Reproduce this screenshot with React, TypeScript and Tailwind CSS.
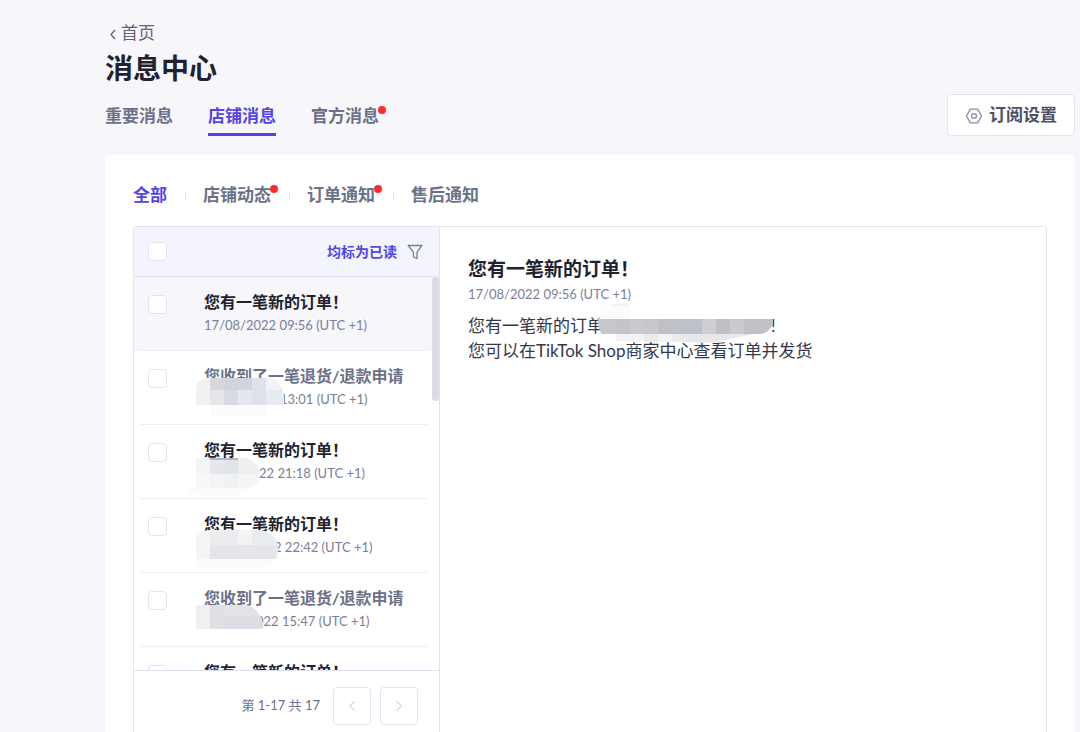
import { ChevronLeft, ChevronRight } from 'lucide-react';
import React from 'react';

type Block = { x: number; y: number; w: number; h: number; fill: string };

type Message = {
  id: number;
  title: string;
  time?: string;
  unread: boolean;
  // width of the censored start of the date
  pad?: string;
  maskTop?: string;
  mask?: { path: string; tail?: string; blocks: Block[] };
};

const messages: Message[] = [
  { id: 1, title: '您有一笔新的订单！', time: '17/08/2022 09:56 (UTC +1)', unread: true },
  {
    id: 2,
    title: '您收到了一笔退货/退款申请',
    time: '13:01 (UTC +1)',
    unread: false,
    pad: 'pl-[76px]',
    maskTop: 'top-[14px]',
    mask: {
      path: 'M0 27V10Q2 1 12 0H74Q86 3 88 18V27Z',
      tail: 'M14 27H70V37H14Z',
      blocks: [
        { x: 0, y: 0, w: 14, h: 27, fill: '#f1f1f3' },
        { x: 14, y: 0, w: 14, h: 12, fill: '#d6d7df' },
        { x: 28, y: 0, w: 28, h: 12, fill: '#d1d3dd' },
        { x: 56, y: 0, w: 14, h: 12, fill: '#dfe0ea' },
        { x: 70, y: 0, w: 18, h: 12, fill: '#f3f3f5' },
        { x: 14, y: 12, w: 14, h: 15, fill: '#e5e6ea' },
        { x: 28, y: 12, w: 14, h: 15, fill: '#d9dbe3' },
        { x: 42, y: 12, w: 14, h: 15, fill: '#e6e7ec' },
        { x: 56, y: 12, w: 14, h: 15, fill: '#dfe1e8' },
        { x: 70, y: 12, w: 18, h: 15, fill: '#e7eaee' },
      ],
    },
  },
  {
    id: 3,
    title: '您有一笔新的订单！',
    time: '22 21:18 (UTC +1)',
    unread: true,
    pad: 'pl-[55px]',
    maskTop: 'top-5',
    mask: {
      path: 'M0 0H50Q63 4 64 17Q63 27 54 30H0Z',
      tail: 'M-8 30H56Q48 36 40 37H0Q-6 36 -8 30Z',
      blocks: [
        { x: 0, y: 0, w: 14, h: 16, fill: '#f3f4f6' },
        { x: 0, y: 16, w: 14, h: 14, fill: '#f8f8f9' },
        { x: 14, y: 0, w: 14, h: 16, fill: '#e6e7ea' },
        { x: 28, y: 0, w: 14, h: 16, fill: '#e1e4ea' },
        { x: 42, y: 0, w: 22, h: 16, fill: '#eeeff1' },
        { x: 14, y: 16, w: 14, h: 14, fill: '#f4f4f6' },
        { x: 28, y: 16, w: 14, h: 14, fill: '#f0f1f3' },
        { x: 42, y: 16, w: 22, h: 14, fill: '#f5f5f6' },
        { x: 14, y: 0, w: 28, h: 2, fill: '#b4b5bc' },
      ],
    },
  },
  {
    id: 4,
    title: '您有一笔新的订单！',
    time: '2 22:42 (UTC +1)',
    unread: true,
    pad: 'pl-[70px]',
    maskTop: 'top-[18px]',
    mask: {
      path: 'M0 29V8Q3 0 14 0H66Q80 4 82 16Q82 25 80 29Z',
      tail: 'M0 29H80Q74 38 62 38H10Q0 36 0 29Z',
      blocks: [
        { x: 0, y: 0, w: 14, h: 29, fill: '#f5f5f6' },
        { x: 14, y: 0, w: 28, h: 15, fill: '#ececee' },
        { x: 42, y: 0, w: 14, h: 15, fill: '#f3f3f5' },
        { x: 56, y: 0, w: 26, h: 15, fill: '#ebecee' },
        { x: 14, y: 15, w: 28, h: 14, fill: '#e4e5e8' },
        { x: 42, y: 15, w: 14, h: 14, fill: '#e6e6ea' },
        { x: 56, y: 15, w: 26, h: 14, fill: '#e5e6ea' },
      ],
    },
  },
  {
    id: 5,
    title: '您收到了一笔退货/退款申请',
    time: '022 15:47 (UTC +1)',
    unread: false,
    pad: 'pl-[52px]',
    maskTop: 'top-[19px]',
    mask: {
      path: 'M0 0H52Q66 7 67 20V24H0Z',
      blocks: [
        { x: 0, y: 0, w: 14, h: 24, fill: '#f0f0f2' },
        { x: 14, y: 0, w: 14, h: 24, fill: '#dfe0e4' },
        { x: 28, y: 0, w: 39, h: 11, fill: '#e2e3e7' },
        { x: 28, y: 11, w: 39, h: 13, fill: '#dddee3' },
      ],
    },
  },
  { id: 6, title: '您有一笔新的订单！', unread: true },
];

const Dot = () => (
  <span className="absolute -right-[7px] top-0.5 size-2 rounded-full bg-[#ff2a2a]"></span>
);

const Mask = ({ id, path, tail, blocks }: { id: string; path: string; tail?: string; blocks: Block[] }) => (
  <svg width="90" height="40" viewBox="0 0 90 40" className="overflow-visible" aria-hidden="true">
    <clipPath id={id}>
      <path d={path} />
    </clipPath>
    {tail && <path d={tail} fill="#fbfbfc" />}
    <g clipPath={`url(#${id})`} shapeRendering="crispEdges">
      {blocks.map((b, i) => (
        <rect key={i} x={b.x} y={b.y} width={b.w} height={b.h} fill={b.fill} />
      ))}
    </g>
  </svg>
);

const OrderMask = () => (
  <svg width="180" height="40" viewBox="0 0 180 40" className="overflow-visible" aria-hidden="true">
    <path d="M0 14Q2 0 16 -4H32V14Z" fill="#fcfcfd" />
    <path d="M10 -4Q20 -7 32 -5V-3H12Z" fill="#f2f2f4" />
    <path d="M18 25H88V33H72L18 32Z" fill="#f3f3f4" />
    <path d="M46 25H60V33H46ZM74 25H88V33H74Z" fill="#ebebed" />
    <path d="M88 25H158Q138 28 128 31Q112 35 88 33Z" fill="#e8e8ea" />
    <clipPath id="order-mask">
      <path d="M0 10H175V14Q172 23 163 25H4Q0 21 0 10Z" />
    </clipPath>
    <g clipPath="url(#order-mask)" shapeRendering="crispEdges">
      <rect width="180" height="25" fill="#c8c8cc" />
      <rect x="18" width="14" height="25" fill="#c4c4c9" />
      <rect x="32" width="14" height="25" fill="#c9cad0" />
      <rect x="60" width="14" height="25" fill="#c0c0c5" />
      <rect x="74" width="30" height="25" fill="#bec1c8" />
      <rect x="104" width="14" height="25" fill="#cfcfd3" />
      <rect x="118" width="14" height="25" fill="#bfc0c6" />
      <rect x="132" width="14" height="25" fill="#cbcbcf" />
      <rect x="146" width="30" height="25" fill="#c0c1c5" />
    </g>
  </svg>
);

const Checkbox = ({ label }: { label: string }) => (
  <input
    type="checkbox"
    aria-label={label}
    className="size-[19px] shrink-0 appearance-none rounded border border-[#e3e4f0] bg-white checked:bg-[#5146e5]"
  />
);

const PageHeader = () => (
  <header className="flex items-end justify-between">
    <div>
      <a href="#" className="flex items-center gap-1 pl-1 text-[17px] leading-[22px] text-[#5d6378]">
        <svg width="8" height="12" viewBox="0 0 8 12" fill="none" stroke="currentColor" strokeWidth="1.3" className="mt-0.5">
          <path d="M6 2 2 6.5 6 11" />
        </svg>
        首页
      </a>
      <h1 className="mt-1.5 text-[28px] font-bold leading-9 text-[#20232f]">消息中心</h1>
      <nav className="mt-[18px] flex gap-[35px] text-[17px] font-bold leading-6 text-[#6b7188]">
        <a href="#" className="border-b-3 border-transparent pb-[5px]">重要消息</a>
        <a href="#" className="border-b-3 border-[#5146e5] pb-[5px] text-[#5146e5]">店铺消息</a>
        <a href="#" className="relative border-b-3 border-transparent pb-[5px]">
          官方消息
          <Dot />
        </a>
      </nav>
    </div>
    <button className="flex h-[42px] items-center gap-1.5 rounded border border-[#e3e4f0] bg-white px-[17px] text-[17px] font-bold text-[#4c5166]">
      <svg width="18" height="18" viewBox="0 0 18 18" fill="none" stroke="#858aa3" strokeWidth="1.3" className="mt-0.5">
        <path d="M5.4 2.2h7.2L16.6 9l-4 6.8H5.4L1.4 9z" strokeLinejoin="round" />
        <circle cx="9" cy="9" r="2.4" />
      </svg>
      订阅设置
    </button>
  </header>
);

const Separator = () => <span className="ml-[18px] mr-[17px] h-2 w-px bg-[#dfe0ee]"></span>;

const CategoryTabs = () => (
  <nav className="flex items-center text-[17px] font-bold leading-6 text-[#6b7188]">
    <a href="#" className="text-[#5146e5]">全部</a>
    <Separator />
    <a href="#" className="relative">店铺动态<Dot /></a>
    <Separator />
    <a href="#" className="relative">订单通知<Dot /></a>
    <Separator />
    <a href="#">售后通知</a>
  </nav>
);

const MessageRow = ({ message, selected }: { message: Message; selected: boolean }) => (
  <li className={selected ? 'bg-[#f6f6fb]' : 'bg-white'}>
    <div className="ml-1.5 mr-3 flex h-[74px] gap-[37px] border-b border-[#ecedf7] pl-2 pt-[13px]">
      <div className="pt-[5px]">
        <Checkbox label={message.title} />
      </div>
      <div className="relative whitespace-nowrap">
        <h3 className={`text-base font-bold leading-6 ${message.unread ? 'text-[#20232f]' : 'text-[#6b7188]'}`}>
          {message.title}
        </h3>
        {message.time && (
          <p className={`text-[13px] leading-[22px] text-[#7b8096] ${message.pad ?? ''}`}>{message.time}</p>
        )}
        {message.mask && (
          <div className={`absolute -left-2 ${message.maskTop}`}>
            <Mask id={`mask-${message.id}`} {...message.mask} />
          </div>
        )}
      </div>
    </div>
  </li>
);

const MessageList = () => (
  <section className="flex w-[306px] shrink-0 flex-col border-r border-[#e0e2f0]">
    <div className="flex h-[50px] shrink-0 items-center rounded-tl border-b border-[#e0e2f0] bg-[#f4f4fe] pl-3.5 pr-4">
      <Checkbox label="全选" />
      <button className="ml-auto text-sm font-bold text-[#5146e5]">均标为已读</button>
      <button aria-label="筛选" className="ml-2.5">
        <svg width="16" height="16" viewBox="0 0 16 16" fill="none" stroke="#7b8096" strokeWidth="1.3">
          <path d="M1.2 1.5h13.6L10 8.2v6.3l-3.6-1.6V8.2z" strokeLinejoin="round" />
        </svg>
      </button>
    </div>
    <div className="relative min-h-0 flex-1">
      <ul className="h-full overflow-y-auto [scrollbar-width:none]">
        {messages.map((m) => (
          <MessageRow key={m.id} message={m} selected={m.id === 1} />
        ))}
      </ul>
      <div className="absolute right-0 top-0 h-[124px] w-[7px] rounded-full bg-[#d9dbe5]"></div>
    </div>
    <footer className="flex h-[62px] shrink-0 items-start justify-end gap-[9px] border-t border-[#dcdff0] pr-[21px] pt-4">
      <span className="mr-1 text-[13px] leading-9 text-[#6b7188]">第 1-17 共 17</span>
      <button aria-label="上一页" className="flex size-[38px] items-center justify-center rounded border border-[#e3e4f0] text-[#d3d6e4]">
        <ChevronLeft size={18} strokeWidth={1.5} />
      </button>
      <button aria-label="下一页" className="flex size-[38px] items-center justify-center rounded border border-[#e3e4f0] text-[#d3d6e4]">
        <ChevronRight size={18} strokeWidth={1.5} />
      </button>
    </footer>
  </section>
);

const MessageDetail = () => (
  <article className="flex-1 px-7 pt-7 text-[#33374a]">
    <h2 className="text-[19px] font-bold leading-7 text-[#20232f]">您有一笔新的订单！</h2>
    <p className="text-[13px] leading-[22px] text-[#7b8096]">17/08/2022 09:56 (UTC +1)</p>
    <div className="mt-2 text-[17px] leading-[25px]">
      <p className="flex">
        您有一笔新的订单
        <span className="relative w-[167px]">
          <span className="absolute -left-1.5 -top-1 z-10">
            <OrderMask />
          </span>
        </span>
        !
      </p>
      <p>您可以在TikTok Shop商家中心查看订单并发货</p>
    </div>
  </article>
);

const App = () => (
  <div className="flex h-screen flex-col overflow-hidden bg-[#f7f7fb] pl-[105px] pr-[5px] pt-[22px] font-['Lato','Noto_Sans_CJK_SC',sans-serif]">
    <PageHeader />
    <main className="mt-[19px] flex min-h-0 flex-1 flex-col rounded-t-md bg-white px-7 pt-7">
      <CategoryTabs />
      <div className="mt-[19px] flex min-h-0 flex-1 rounded-t border-x border-t border-[#e3e6f1]">
        <MessageList />
        <MessageDetail />
      </div>
    </main>
  </div>
);

export default App;
